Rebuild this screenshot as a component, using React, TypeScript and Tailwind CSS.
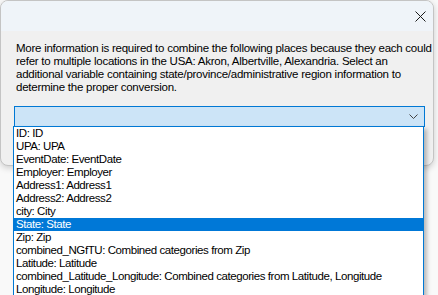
import { useState } from "react"

const options = [
  "ID: ID",
  "UPA: UPA",
  "EventDate: EventDate",
  "Employer: Employer",
  "Address1: Address1",
  "Address2: Address2",
  "city: City",
  "State: State",
  "Zip: Zip",
  "combined_NGfTU: Combined categories from Zip",
  "Latitude: Latitude",
  "combined_Latitude_Longitude: Combined categories from Latitude, Longitude",
  "Longitude: Longitude",
]

export default function App() {
  const [selected, setSelected] = useState("State: State")

  return (
    <div
      className="relative w-[438px] h-[295px] overflow-hidden bg-[#f9f9f9] text-[11.5px] tracking-[-0.3px] text-black"
      style={{ fontFamily: '"Liberation Sans", Arial, sans-serif' }}
    >
      <div className="w-[434px] h-[166px] rounded-lg border border-[#c4c4c4] bg-[#f0f0f0] overflow-hidden flex flex-col shadow-[0_2px_6px_rgba(0,0,0,0.18)]">
        <div className="h-[30px] bg-[#eff4f9] flex justify-end items-center pr-[1px] shrink-0">
          <button className="w-[24px] h-[24px] flex items-center justify-center">
            <svg width="11" height="11" viewBox="0 0 11 11">
              <path d="M0.5 0.5 L10.5 10.5 M10.5 0.5 L0.5 10.5" stroke="#1a1a1a" strokeWidth="1" />
            </svg>
          </button>
        </div>
        <div className="pl-[15px] pr-[4px] pt-[11px]">
          <p className="leading-[13px] whitespace-nowrap tracking-[-0.25px]">
            More information is required to combine the following places because they each could
            <br />
            refer to multiple locations in the USA: Akron, Albertville, Alexandria. Select an
            <br />
            additional variable containing state/province/administrative region information to
            <br />
            determine the proper conversion.
          </p>
          <div className="mt-[12px] h-[21px] w-[411px] -ml-[2px] border border-[#0078d4] bg-[#cce4f7] flex items-center justify-end pr-[6px]">
            <svg width="9" height="6" viewBox="0 0 9 6">
              <path d="M0.5 0.5 L4.5 4.5 L8.5 0.5" stroke="#444" strokeWidth="1" fill="none" />
            </svg>
          </div>
        </div>
      </div>

      <ul className="absolute left-[13px] top-[126px] w-[411px] h-[175px] bg-white border border-[#0078d4] tracking-[-0.42px] shadow-[3px_3px_4px_rgba(0,0,0,0.25)]">
        {options.map((o) => (
          <li
            key={o}
            onClick={() => setSelected(o)}
            className={`h-[13px] leading-[13px] pl-[2px] whitespace-nowrap ${
              o === selected ? "bg-[#0078d7] text-white" : ""
            }`}
          >
            {o}
          </li>
        ))}
      </ul>
    </div>
  )
}
